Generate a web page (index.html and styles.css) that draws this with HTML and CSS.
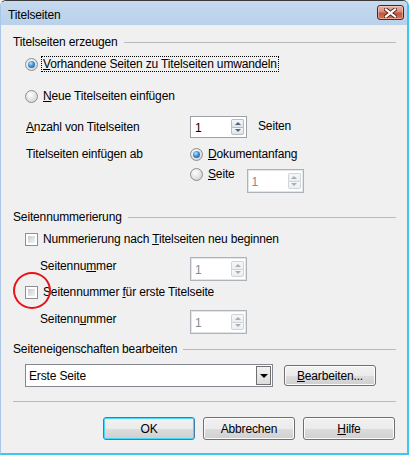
FILE: index.html
```html
<!DOCTYPE html>
<html lang="de">
<head>
    <meta charset="UTF-8">
    <title>Titelseiten</title>
    <link rel="stylesheet" href="styles.css">
</head>
<body>
    <div class="window">
        <div class="titlebar">
            <span class="title">Titelseiten</span>
            <span class="close">
                <svg width="13" height="10" viewBox="0 0 13 10">
                    <path d="M2 1.5 L11 8.5 M11 1.5 L2 8.5" stroke="#5a2018" stroke-width="4" stroke-linecap="square"/>
                    <path d="M2 1.5 L11 8.5 M11 1.5 L2 8.5" stroke="#ffffff" stroke-width="2.2" stroke-linecap="square"/>
                </svg>
            </span>
        </div>

        <div class="client">
            <div class="group-head h1"><span>Titelseiten erzeugen</span></div>

            <div class="row opt r1">
                <span class="radio checked"></span>
                <span class="label focus"><u>V</u>orhandene Seiten zu Titelseiten umwandeln</span>
            </div>
            <div class="row opt r2">
                <span class="radio"></span>
                <span class="label"><u>N</u>eue Titelseiten einfügen</span>
            </div>

            <div class="row field r3">
                <span class="col1"><u>A</u>nzahl von Titelseiten</span>
                <span class="spin">
                    <span class="val">1</span>
                    <span class="spin-btns"><span class="up"></span><span class="down"></span></span>
                </span>
                <span class="after">Seiten</span>
            </div>

            <div class="row field r4">
                <span class="col1">Titelseiten einfügen ab</span>
                <span class="radio checked"></span>
                <span class="label"><u>D</u>okumentanfang</span>
            </div>

            <div class="row r5">
                <span class="radio-lbl">
                    <span class="radio"></span>
                    <span class="label"><u>S</u>eite</span>
                </span>
                <span class="spin disabled">
                    <span class="val">1</span>
                    <span class="spin-btns"><span class="up"></span><span class="down"></span></span>
                </span>
            </div>

            <div class="group-head h2"><span>Seitennummerierung</span></div>

            <div class="row opt c1">
                <span class="check"></span>
                <span class="label">Nummerierung nach <u>T</u>itelseiten neu beginnen</span>
            </div>

            <div class="row num n1">
                <span class="col1">Seitennu<u>m</u>mer</span>
                <span class="spin disabled">
                    <span class="val">1</span>
                    <span class="spin-btns"><span class="up"></span><span class="down"></span></span>
                </span>
            </div>

            <div class="row opt c2">
                <span class="check"></span>
                <span class="label">Seitennummer <u>f</u>ür erste Titelseite</span>
            </div>

            <div class="row num n2">
                <span class="col1">Seitenn<u>u</u>mmer</span>
                <span class="spin disabled">
                    <span class="val">1</span>
                    <span class="spin-btns"><span class="up"></span><span class="down"></span></span>
                </span>
            </div>

            <div class="group-head h3"><span>Seiteneigenschaften bearbeiten</span></div>

            <div class="row combo-row">
                <span class="combo">
                    <span class="val">Erste Seite</span>
                    <span class="drop"></span>
                </span>
                <button class="btn edit"><u>B</u>earbeiten...</button>
            </div>

            <div class="separator"></div>

            <div class="buttons">
                <button class="btn default">OK</button>
                <button class="btn">Abbrechen</button>
                <button class="btn"><u>H</u>ilfe</button>
            </div>
        </div>

        <div class="marker"></div>
    </div>
</body>
</html>
```

FILE: styles.css
```css
body { margin: 0; font-family: "Liberation Sans", Arial, sans-serif; font-size: 12px; letter-spacing: -0.15px; color: #000; background: #f0f0f0; }
u { text-decoration: underline; text-underline-offset: 1px; }

.window { position: relative; width: 409px; height: 455px; box-sizing: border-box; border: 1px solid; border-color: #3a3a3a #3cc6f0 #3cc6f0 #a9c6e6; border-width: 1px 2px 2px 1px; border-radius: 6px 6px 0 0; background: #f0f0f0; overflow: hidden; }

.titlebar { height: 24px; display: flex; justify-content: space-between; align-items: flex-start; padding: 0 3px 0 7px; background: linear-gradient(#c6d9ee, #b9d1ea); }
.title { line-height: 28px; }
.close { margin-top: 4px; width: 27px; height: 15px; box-sizing: border-box; border: 1px solid #5e1d14; border-radius: 3px; display: flex; align-items: center; justify-content: center; background: linear-gradient(#eab4a6 0%, #d98a76 45%, #c4523a 55%, #d2765e 100%); box-shadow: inset 0 0 0 1px rgba(255, 220, 210, 0.5); }

.client { padding: 0 11px 0 12px; }

.group-head { height: 18px; display: flex; align-items: center; gap: 6px; }
.group-head::after { content: ""; flex: 1; border-top: 1px solid #b9b9b9; }
.h1 { margin-top: 8px; }
.h2 { margin-top: 16px; }
.h3 { margin-top: 6px; }

.row { display: flex; align-items: center; }
.opt { height: 18px; padding-left: 12px; }
.r1 { margin-top: 4px; }
.r2 { margin-top: 14px; }
.field { padding-left: 13px; }
.r3 { height: 22px; margin-top: 11px; }
.r4 { height: 18px; margin-top: 7px; }
.r5 { height: 27px; margin-top: 2px; padding-left: 177px; align-items: flex-start; }
.c1 { margin-top: 4px; }
.num { height: 24px; margin-top: 9px; padding-left: 27px; align-items: flex-start; }
.c2 { margin-top: 2px; }
.field .col1 { width: 164px; }
.num .col1 { width: 150px; line-height: 18px; }
.after { margin-left: 11px; margin-top: -2px; }

.label { margin-left: 4px; padding: 0 1px; line-height: 14px; }
.focus { outline: 1px dotted #000; outline-offset: 0; }
.radio-lbl { display: flex; align-items: center; height: 18px; }
.r5 .spin { margin-left: 11px; margin-top: 4px; }

.radio { width: 13px; height: 13px; box-sizing: border-box; border: 1px solid #8e8f8f; border-radius: 50%; background: radial-gradient(circle at 40% 35%, #ffffff 0%, #e6e6e6 45%, #cbcbcb 100%); position: relative; flex: none; }
.radio.checked::after { content: ""; position: absolute; left: 2px; top: 2px; width: 7px; height: 7px; border-radius: 50%; background: radial-gradient(circle at 40% 35%, #bfe4fb 0%, #3b8fd4 45%, #1a4f8a 100%); }

.check { width: 13px; height: 13px; box-sizing: border-box; border: 1px solid #8e8f8f; background: #fff; padding: 2px; flex: none; }
.check::after { content: ""; display: block; width: 7px; height: 7px; background: linear-gradient(135deg, #c7cbd1, #f4f4f4); }

.spin { width: 57px; height: 22px; box-sizing: border-box; border: 1px solid #9ba1a6; background: #fff; display: flex; align-items: center; flex: none; }
.spin .val { padding-left: 4px; flex: 1; line-height: 14px; margin-top: 2px; }
.spin-btns { width: 13px; height: 16px; margin-right: 2px; display: flex; flex-direction: column; }
.spin-btns span { flex: 1; box-sizing: border-box; border: 1px solid #b7bdc5; background: linear-gradient(#f6f7f9, #dfe4ea); display: flex; align-items: center; justify-content: center; }
.spin-btns .up { border-bottom: 0; border-radius: 2px 2px 0 0; }
.spin-btns .down { border-radius: 0 0 2px 2px; }
.spin-btns .up::after { content: ""; border: 3px solid transparent; border-top: 0; border-bottom: 3px solid #4f6082; }
.spin-btns .down::after { content: ""; border: 3px solid transparent; border-bottom: 0; border-top: 3px solid #4f6082; }
.spin.disabled { height: 24px; border-color: #adb3b8; box-shadow: inset 0 0 0 1px #e1e6eb; }
.spin.disabled .val { color: #8c8790; }
.spin.disabled .spin-btns span { border-color: #d0d4d8; background: linear-gradient(#f7f7f7, #eceef0); }
.spin.disabled .spin-btns .up::after { border-bottom-color: #a7aeb6; }
.spin.disabled .spin-btns .down::after { border-top-color: #a7aeb6; }

.combo-row { height: 23px; margin-top: 6px; padding-left: 12px; }
.combo { width: 248px; height: 23px; box-sizing: border-box; border: 1px solid #828790; background: #fff; display: flex; align-items: center; padding: 1px; }
.combo .val { flex: 1; padding-left: 2px; }
.drop { width: 15px; height: 19px; box-sizing: border-box; border: 1px solid #707070; background: linear-gradient(#f2f2f2, #dcdcdc); display: flex; align-items: center; justify-content: center; }
.drop::after { content: ""; border: 4px solid transparent; border-bottom: 0; border-top: 4px solid #000; }

.btn { font: inherit; letter-spacing: inherit; color: #000; height: 23px; box-sizing: border-box; border: 1px solid #707070; border-radius: 3px; background: linear-gradient(#f2f2f2 0%, #ebebeb 50%, #dddddd 51%, #cfcfcf 100%); box-shadow: inset 0 0 0 1px #fcfcfc; padding: 0; }
.edit { width: 92px; height: 21px; margin-left: 11px; }
.btn.default { border-color: #3c7fb1; box-shadow: inset 0 0 0 1px #48d8fb; }

.separator { margin-top: 14px; border-top: 1px solid #b9b9b9; }

.buttons { margin-top: 15px; display: flex; justify-content: flex-end; gap: 8px; padding-right: 1px; }
.buttons .btn { width: 92px; }

.marker { position: absolute; left: 12px; top: 271px; width: 38px; height: 37px; box-sizing: border-box; border: 2px solid #e5141a; border-radius: 50%; }
```
